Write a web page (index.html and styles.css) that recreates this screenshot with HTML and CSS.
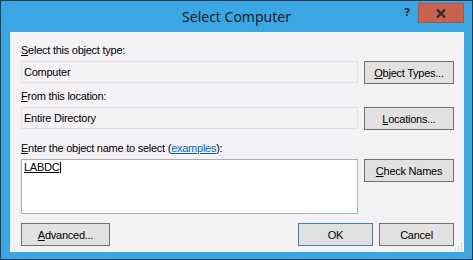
FILE: index.html
```html
<!DOCTYPE html>
<html lang="en">
<head>
    <meta charset="UTF-8">
    <title>Select Computer</title>
    <link rel="stylesheet" href="styles.css">
</head>
<body>
    <div class="window">
        <div class="titlebar">
            <span></span>
            <span class="title">Select Computer</span>
            <div class="controls">
                <span class="help">?</span>
                <span class="close">
                    <svg width="10" height="9" viewBox="0 0 10 9"><path d="M1 0.5 L9 8.5 M9 0.5 L1 8.5" stroke="#2a2a2a" stroke-width="2.2"/></svg>
                </span>
            </div>
        </div>
        <div class="panel">
            <div class="label"><u>S</u>elect this object type:</div>
            <div class="box">Computer</div>
            <button class="btn"><u>O</u>bject Types...</button>

            <div class="label second"><u>F</u>rom this location:</div>
            <div class="box">Entire Directory</div>
            <button class="btn"><u>L</u>ocations...</button>

            <div class="label third"><u>E</u>nter the object name to select (<a href="#">examples</a>):</div>
            <div class="names"><span class="typed">LABDC</span><span class="caret"></span></div>
            <button class="btn top"><u>C</u>heck Names</button>

            <div class="footer">
                <button class="btn adv"><u>A</u>dvanced...</button>
                <div class="actions">
                    <button class="btn ok">OK</button>
                    <button class="btn">Cancel</button>
                </div>
            </div>
            <span class="grip"></span>
        </div>
    </div>
</body>
</html>
```
FILE: styles.css
```css
body {
    margin: 0;
    font-family: "Liberation Sans", Arial, sans-serif;
    font-size: 11px;
    letter-spacing: -0.25px;
    color: #000;
}
.window {
    width: 473px;
    height: 260px;
    box-sizing: border-box;
    border: 1px solid #2d3a44;
    background: #3aa6e4;
}
.titlebar {
    height: 31px;
    display: grid;
    grid-template-columns: 1fr auto 1fr;
}
.title {
    font-family: "Noto Sans", "Open Sans", sans-serif;
    font-size: 14px;
    letter-spacing: 0;
    line-height: 20px;
    padding-top: 6px;
    color: #1b1b1b;
}
.controls {
    justify-self: end;
    display: flex;
    align-items: flex-start;
    margin-right: 8px;
    padding-top: 2px;
}
.help {
    width: 26px;
    text-align: center;
    font-family: "DejaVu Sans", sans-serif;
    font-weight: bold;
    font-size: 11px;
    color: #2a2a2a;
    line-height: 20px;
    margin-right: -2px;
}
.close {
    width: 46px;
    height: 20px;
    box-sizing: border-box;
    background: #c9634f;
    border: 1px solid #b2533f;
    display: flex;
    align-items: center;
    justify-content: center;
}
.panel {
    position: relative;
    margin: 0 8px 0 9px;
    height: 220px;
    box-sizing: border-box;
    background: #f5f2f6;
    padding: 12px 10px 0 11px;
    display: grid;
    grid-template-columns: 337px 90px;
    column-gap: 6px;
    align-content: start;
    align-items: start;
}
.label {
    grid-column: 1;
    line-height: 13px;
    white-space: nowrap;
}
.label.second {
    margin-top: 6px;
}
.label.third {
    margin-top: 12px;
}
.label a {
    color: #0066cc;
}
.box {
    grid-column: 1;
    margin-top: 4px;
    height: 22px;
    box-sizing: border-box;
    border: 1px solid #e2dfe6;
    padding-left: 2px;
    line-height: 20px;
}
.names {
    grid-column: 1;
    margin-top: 4px;
    height: 55px;
    box-sizing: border-box;
    border: 1px solid #abadb3;
    background: #fff;
    padding: 1px 2px;
    line-height: 13px;
    display: flex;
    align-items: flex-start;
}
.typed {
    text-decoration: underline;
}
.caret {
    width: 1px;
    height: 11px;
    margin-top: 1px;
    margin-left: 1px;
    background: #000;
}
.btn {
    grid-column: 2;
    margin-top: 4px;
    height: 23px;
    width: 90px;
    box-sizing: border-box;
    border: 1px solid #707070;
    background: #e1e1e1;
    font-family: inherit;
    font-size: 11px;
    letter-spacing: inherit;
    color: #000;
    padding: 0;
}
.footer {
    grid-column: 1 / -1;
    margin-top: 9px;
    display: flex;
    justify-content: space-between;
}
.footer .btn {
    margin-top: 0;
}
.adv {
    width: 89px;
}
.actions {
    display: flex;
    gap: 6px;
}
.actions .btn {
    width: 75px;
}
.ok {
    border-color: #3c7fb1;
}
.grip {
    position: absolute;
    right: 2px;
    bottom: 2px;
    width: 7px;
    height: 7px;
    background:
        linear-gradient(#b8b8b8, #b8b8b8) 6px 0 / 1px 1px no-repeat,
        linear-gradient(#b8b8b8, #b8b8b8) 3px 3px / 1px 1px no-repeat,
        linear-gradient(#b8b8b8, #b8b8b8) 6px 3px / 1px 1px no-repeat,
        linear-gradient(#b8b8b8, #b8b8b8) 0 6px / 1px 1px no-repeat,
        linear-gradient(#b8b8b8, #b8b8b8) 3px 6px / 1px 1px no-repeat,
        linear-gradient(#b8b8b8, #b8b8b8) 6px 6px / 1px 1px no-repeat;
}
```
